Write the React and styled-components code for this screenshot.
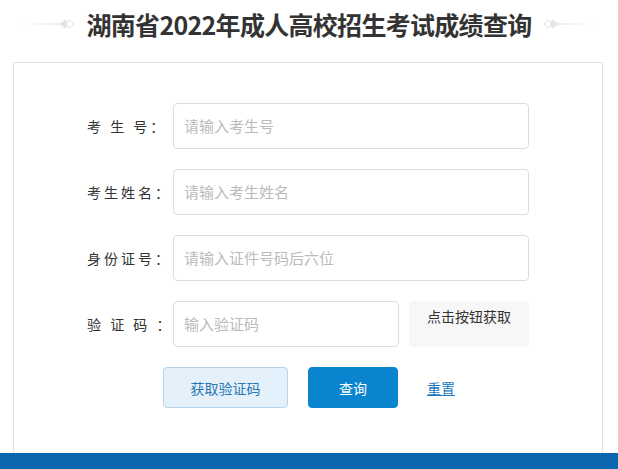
import styled, { createGlobalStyle } from "styled-components"

const GlobalStyle = createGlobalStyle`
    body {
        margin: 0;
        background: #fff;
        font-family: "Noto Sans CJK SC", "Noto Sans", sans-serif;
    }
`;

const Page = styled.div`
    width: 618px;
    height: 469px;
    overflow: hidden;
    display: flex;
    flex-direction: column;
`;

const Header = styled.div`
    height: 48px;
    margin-bottom: 14px;
    display: flex;
    align-items: center;
    justify-content: center;
    gap: 8px;
`;

const Title = styled.h1`
    margin: 0;
    font-size: 25px;
    font-weight: 700;
    color: #333;
    letter-spacing: -0.7px;
`;

const Card = styled.div`
    margin: 0 15px 0 13px;
    border: 1px solid #e2e2e2;
    border-bottom: none;
    padding: 40px 0 45px 73px;
    display: flex;
    flex-direction: column;
    gap: 21px;
`;

const Row = styled.div`
    display: flex;
    align-items: center;
    height: 45px;
`;

const Label = styled.label`
    width: 86px;
    font-size: 14px;
    letter-spacing: 3px;
    color: #333;
    white-space: pre;
`;

const Input = styled.input`
    box-sizing: border-box;
    width: ${(p) => p.$w || 356}px;
    height: 46px;
    border: 1px solid #dcdcdc;
    border-radius: 4px;
    padding: 0 10px;
    font-family: inherit;
    font-size: 15px;
    color: #333;
    outline: none;
    &::placeholder {
        color: #bbb;
    }
`;

const CodeBox = styled.div`
    box-sizing: border-box;
    width: 120px;
    height: 46px;
    margin-left: 10px;
    background: #f7f7f7;
    border-radius: 3px;
    padding-top: 5px;
    text-align: center;
    font-size: 14px;
    color: #333;
`;

const Actions = styled.div`
    display: flex;
    align-items: center;
    gap: 20px;
    padding-left: 76px;
`;

const Button = styled.button`
    box-sizing: border-box;
    height: 41px;
    width: ${(p) => p.$w}px;
    border-radius: 4px;
    font-family: inherit;
    font-size: 14px;
    cursor: pointer;
    border: 1px solid ${(p) => (p.$primary ? "#0b84cf" : "#b4d5ec")};
    background: ${(p) => (p.$primary ? "#0b84cf" : "#e4f1fb")};
    color: ${(p) => (p.$primary ? "#fff" : "#2a77b4")};
`;

const Reset = styled.a`
    margin-left: 9px;
    font-size: 14px;
    color: #1a7ac4;
    text-decoration: underline;
    cursor: pointer;
`;

const Footer = styled.div`
    flex: 1;
    background: #0a67b0;
`;

const Ornament = ({ flip }) => (
    <svg width="60" height="12" viewBox="0 0 60 12" style={flip ? { transform: "scaleX(-1)" } : undefined}>
        <defs>
            <linearGradient id={flip ? "lr" : "ll"} x1="0" x2="1">
                <stop offset="0" stopColor="#e6e6e6" stopOpacity="0" />
                <stop offset="1" stopColor="#d6d6d6" />
            </linearGradient>
        </defs>
        <rect x="0" y="5.5" width="44" height="1" fill={`url(#${flip ? "lr" : "ll"})`} />
        <path d="M42 6 L47 1.5 L52 6 L47 10.5 Z" fill="#e4e4e4" />
        <path d="M48 6 L52 2 L56 6 L52 10 Z" fill="#fff" stroke="#e0e0e0" strokeWidth="1" />
    </svg>
);

const fields = [
    { label: "考 生 号：", placeholder: "请输入考生号" },
    { label: "考生姓名：", placeholder: "请输入考生姓名" },
    { label: "身份证号：", placeholder: "请输入证件号码后六位" },
];

const App = () => {
    return (
        <>
            <GlobalStyle />
            <Page>
                <Header>
                    <Ornament />
                    <Title>湖南省2022年成人高校招生考试成绩查询</Title>
                    <Ornament flip />
                </Header>
                <Card>
                    {fields.map((f) => (
                        <Row key={f.label}>
                            <Label>{f.label}</Label>
                            <Input placeholder={f.placeholder} />
                        </Row>
                    ))}
                    <Row>
                        <Label>验 证 码 ：</Label>
                        <Input $w={226} placeholder="输入验证码" />
                        <CodeBox>点击按钮获取</CodeBox>
                    </Row>
                    <Actions>
                        <Button $w={125}>获取验证码</Button>
                        <Button $w={90} $primary>查询</Button>
                        <Reset>重置</Reset>
                    </Actions>
                </Card>
                <Footer />
            </Page>
        </>
    )
};

export default App;
